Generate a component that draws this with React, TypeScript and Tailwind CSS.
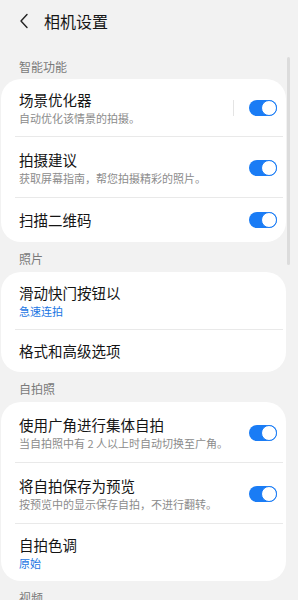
import React from 'react';

type Row = {
  title: string;
  sub?: string;
  blue?: boolean;
  toggle?: boolean;
  sep?: boolean;
  tight?: boolean;
};

const sections: { label: string; rows: Row[] }[] = [
  {
    label: '智能功能',
    rows: [
      { title: '场景优化器', sub: '自动优化该情景的拍摄。', toggle: true, sep: true, tight: true },
      { title: '拍摄建议', sub: '获取屏幕指南，帮您拍摄精彩的照片。', toggle: true },
      { title: '扫描二维码', toggle: true },
    ],
  },
  {
    label: '照片',
    rows: [
      { title: '滑动快门按钮以', sub: '急速连拍', blue: true, tight: true },
      { title: '格式和高级选项', tight: true },
    ],
  },
  {
    label: '自拍照',
    rows: [
      { title: '使用广角进行集体自拍', sub: '当自拍照中有 2 人以上时自动切换至广角。', toggle: true },
      { title: '将自拍保存为预览', sub: '按预览中的显示保存自拍，不进行翻转。', toggle: true },
      { title: '自拍色调', sub: '原始', blue: true, tight: true },
    ],
  },
];

const Toggle = () => (
  <div className="relative w-[28px] h-[16px] rounded-full bg-[#1a7cf5] shrink-0">
    <div className="absolute right-0 top-0 w-[16px] h-[16px] rounded-full bg-white border-[1.5px] border-[#1a7cf5]" />
  </div>
);

const pad = (row: Row) => {
  if (row.sub) return row.tight ? 'pt-[11px] pb-[10px]' : 'pt-[13px] pb-[11px]';
  return row.tight ? 'py-[11px]' : 'py-[12px]';
};

const SettingRow = ({ row }: { row: Row }) => (
  <div className={`flex items-center pl-[18px] pr-[9px] ${pad(row)}`}>
    <div className="flex-1 min-w-0">
      <div className="text-[14.5px] leading-[20px] text-[#141414]">{row.title}</div>
      {row.sub && (
        <div className={`text-[11px] leading-[16px] ${row.blue ? 'text-[#1a76e3]' : 'text-[#8c8c8c]'}`}>
          {row.sub}
        </div>
      )}
    </div>
    {row.sep && <div className="w-px h-[16px] bg-[#e4e4e4] mr-[15px]" />}
    {row.toggle && <Toggle />}
  </div>
);

export default function App() {
  return (
    <div
      className="relative w-[298px] h-[600px] overflow-hidden bg-[#f2f2f2]"
      style={{ fontFamily: '"Noto Sans CJK SC", "Noto Sans", sans-serif' }}
    >
      <div className="h-[42px] flex items-center pl-[19px]">
        <svg width="10" height="16" viewBox="0 0 10 16" fill="none">
          <path d="M8 1.5 L2 8 L8 14.5" stroke="#222" strokeWidth="1.4" strokeLinecap="round" strokeLinejoin="round" />
        </svg>
        <span className="ml-[15px] text-[16px] leading-[22px] text-[#161616]">相机设置</span>
      </div>

      {sections.map((sec, si) => (
        <div key={si}>
          <div className={`pl-[19px] text-[12px] leading-[16px] text-[#7a7a7a] ${si === 0 ? 'pt-[17px] pb-[4px]' : 'pt-[9px] pb-[5px]'}`}>
            {sec.label}
          </div>
          <div className="ml-[1px] w-[285px] bg-white rounded-[20px]">
            {sec.rows.map((row, ri) => (
              <div key={ri}>
                {ri > 0 && <div className="h-px bg-[#e9e9e9] ml-[14px] mr-[3px]" />}
                <SettingRow row={row} />
              </div>
            ))}
          </div>
        </div>
      ))}

      <div className="pl-[19px] pt-[9px] text-[12px] leading-[16px] text-[#7a7a7a]">视频</div>

      <div className="absolute left-[287px] top-[57px] w-[3px] h-[208px] rounded-full bg-[#dcdcdc]" />
    </div>
  );
}
